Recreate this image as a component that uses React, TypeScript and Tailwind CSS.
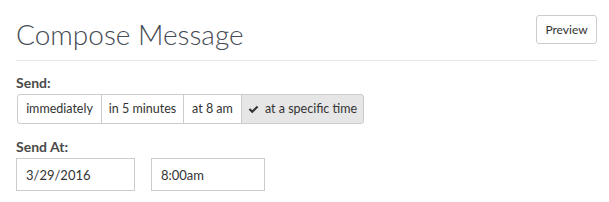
import { useState } from 'react';

const options = [
	{ label: 'immediately', width: 'w-[85px]' },
	{ label: 'in 5 minutes', width: 'w-[83px]' },
	{ label: 'at 8 am', width: 'w-[59px]' },
	{ label: 'at a specific time', width: 'w-[123px]' }
];

function CheckIcon() {
	return (
		<svg viewBox="0 0 16 16" className="w-[11px] h-[11px]" fill="currentColor">
			<path d="M6.2 13.4 1 8.2l2.1-2.1 3.1 3.1 6.7-6.7L15 4.6z" />
		</svg>
	);
}

export default function App() {
	const [send, setSend] = useState(3);

	return (
		<div
			className="w-[609px] h-[202px] bg-white pl-4 pr-3 text-[#333]"
			style={{ fontFamily: 'Lato, "Open Sans", sans-serif' }}
		>
			<div className="flex items-start justify-between h-[61px] border-b border-[#e8e8e8]">
				<h1 className="pt-[14px] text-[28px] font-light leading-[40px] text-[#444a52]">
					Compose Message
				</h1>
				<button className="mt-[15px] h-[29px] w-[61px] rounded-[3px] border border-[#ccc] bg-white text-[12px] text-[#333]">
					Preview
				</button>
			</div>

			<div className="pt-[12px]">
				<div className="text-[14px] font-bold leading-[20px] text-[#4a4a4a]">Send:</div>
				<div className="mt-[1px] flex h-[30px] w-fit pl-px">
					{options.map(({ label, width }, i) => (
						<button
							key={label}
							onClick={() => setSend(i)}
							className={
								'flex items-center justify-center gap-[6px] border border-[#ccc] text-[12.5px] ' +
								width +
								' ' +
								(i > 0 ? '-ml-px ' : 'rounded-l-[3px] ') +
								(i === options.length - 1 ? 'rounded-r-[3px] ' : '') +
								(send === i ? 'bg-[#e6e6e6] border-[#adadad] z-10' : 'bg-white')
							}
						>
							{send === i && <CheckIcon />}
							{label}
						</button>
					))}
				</div>
			</div>

			<div className="pt-[13px]">
				<div className="text-[14px] font-bold leading-[20px] text-[#4a4a4a]">Send At:</div>
				<div className="mt-[1px] flex gap-4">
					<input
						className="h-[33px] w-[119px] border border-[#ccc] px-[9px] text-[13px] text-[#333]"
						defaultValue="3/29/2016"
					/>
					<input
						className="h-[33px] w-[114px] border border-[#ccc] px-[9px] text-[13px] text-[#333]"
						defaultValue="8:00am"
					/>
				</div>
			</div>
		</div>
	);
}
